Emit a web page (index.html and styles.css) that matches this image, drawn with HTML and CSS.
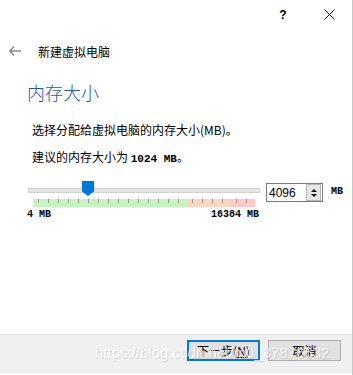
FILE: index.html
```html
<!DOCTYPE html>
<html lang="zh-CN">
<head>
  <meta charset="UTF-8" />
  <title>新建虚拟电脑</title>
  <link rel="stylesheet" href="styles.css">
</head>
<body>
  <div class="window">
    <div class="caption">
      <span class="cap-btn help">?</span>
      <span class="cap-btn close">
        <svg width="11" height="11" viewBox="0 0 11 11"><path d="M0.5 0.5 L10.5 10.5 M10.5 0.5 L0.5 10.5" stroke="#111" stroke-width="1" fill="none"/></svg>
      </span>
    </div>

    <div class="nav">
      <svg class="back" width="12" height="10" viewBox="0 0 12 10"><path d="M5 0.5 L0.8 5 L5 9.5 M0.8 5 H12" stroke="#8a8a8a" stroke-width="1.6" fill="none"/></svg>
      <span class="nav-title">新建虚拟电脑</span>
    </div>

    <div class="content">
      <h1 class="heading">内存大小</h1>
      <p class="line">选择分配给虚拟电脑的内存大小(MB)。</p>
      <p class="line">建议的内存大小为 <b class="mono">1024 MB</b>。</p>

      <div class="slider-row">
        <div class="slider">
          <div class="groove"></div>
          <div class="handle"></div>
          <div class="band">
            <div class="zone green"></div>
            <div class="zone orange"></div>
            <div class="zone red"></div>
          </div>
        </div>
        <div class="spin">
          <span class="spin-val">4096</span>
          <span class="spin-btns">
            <span class="arr up"></span>
            <span class="arr down"></span>
          </span>
        </div>
        <span class="unit mono small">MB</span>
      </div>
      <div class="range-labels mono small">
        <span>4 MB</span>
        <span>16384 MB</span>
      </div>
    </div>

    <div class="footer">
      <button class="btn primary">下一步(<u>N</u>)</button>
      <button class="btn">取消</button>
    </div>

    <div class="watermark">https://blog.csdn.net/m0_37876632</div>
  </div>
</body>
</html>
```

FILE: styles.css
```css
body {
  margin: 0;
  background: #fff;
  font-family: "Noto Sans CJK SC", "DejaVu Sans", sans-serif;
  color: #000;
}
.window {
  position: relative;
  width: 352px;
  height: 375px;
  border-right: 1px solid #c8c8c8;
  display: flex;
  flex-direction: column;
  overflow: hidden;
}
.caption {
  height: 29px;
  display: flex;
  justify-content: flex-end;
}
.cap-btn {
  width: 46px;
  display: flex;
  align-items: center;
  justify-content: center;
  font-family: "Liberation Sans", sans-serif;
  font-size: 12px;
  font-weight: bold;
}
.nav {
  height: 44px;
  display: flex;
  align-items: center;
  padding-left: 9px;
}
.back {
  margin-right: 17px;
}
.nav-title {
  font-size: 12px;
}
.content {
  padding-left: 27px;
  flex: 1;
}
.heading {
  margin: 7px 0 0;
  font-size: 18px;
  font-weight: 300;
  color: #2458ad;
  line-height: 24px;
}
.line {
  margin: 0;
  padding-left: 5px;
  font-size: 12px;
  line-height: 27px;
}
.line:first-of-type {
  margin-top: 12px;
}
.mono {
  font-family: "Liberation Mono", monospace;
  font-size: 11px;
}
.mono.small {
  font-size: 10px;
  font-weight: bold;
}
.slider-row {
  display: flex;
  align-items: flex-start;
  margin-top: 7px;
}
.slider {
  position: relative;
  width: 232px;
  height: 28px;
  margin-left: 1px;
}
.groove {
  margin-top: 8px;
  height: 3px;
  background: #e3e3e3;
  border: 1px solid #d2d2d2;
}
.handle {
  position: absolute;
  left: 54px;
  top: 1px;
  width: 12px;
  height: 15px;
  background: #0078d7;
  clip-path: polygon(0 0, 100% 0, 100% 70%, 50% 100%, 0 70%);
}
.band {
  display: flex;
  margin: 6px 4px 0 5px;
  height: 8px;
}
.zone {
  height: 8px;
  background-image: repeating-linear-gradient(to right, transparent 0, transparent 5px, #a89090 5px, #a89090 6px, transparent 6px, transparent 10px);
  background-size: 100% 4px;
  background-repeat: no-repeat;
}
.green { width: 154px; background-color: #c4f5c0; }
.orange { width: 44px; background-color: #fcd6c0; }
.red { width: 24px; background-color: #ffc8c8; }
.spin {
  margin-left: 6px;
  margin-top: 3px;
  width: 55px;
  height: 17px;
  border: 1px solid #7a7a7a;
  display: flex;
  align-items: center;
  justify-content: space-between;
  font-family: "Liberation Sans", sans-serif;
  font-size: 12px;
}
.spin-val {
  padding-left: 2px;
}
.spin-btns {
  width: 13px;
  height: 15px;
  margin-right: 1px;
  border: 1px solid #b4b4b4;
  background: #e6e6e6;
  display: flex;
  flex-direction: column;
  align-items: center;
  justify-content: center;
  gap: 2px;
}
.arr {
  width: 0;
  height: 0;
  border-left: 3px solid transparent;
  border-right: 3px solid transparent;
}
.up { border-bottom: 3px solid #111; }
.down { border-top: 3px solid #111; }
.unit {
  margin-left: 8px;
  margin-top: 6px;
}
.range-labels {
  width: 232px;
  display: flex;
  justify-content: space-between;
  margin-top: 1px;
}
.footer {
  height: 40px;
  background: #f0f0f0;
  border-top: 1px solid #dcdcdc;
  border-bottom: 1px solid #fff;
  display: flex;
  justify-content: flex-end;
  align-items: flex-start;
  padding-top: 5px;
  padding-right: 11px;
  box-sizing: border-box;
  gap: 8px;
  margin-bottom: 1px;
}
.btn {
  width: 73px;
  height: 21px;
  background: #e1e1e1;
  border: 1px solid #adadad;
  font-family: "Noto Sans CJK SC", sans-serif;
  font-size: 12px;
  padding: 0;
  color: #000;
}
.btn.primary {
  border: 2px solid #0078d7;
}
.watermark {
  position: absolute;
  left: 95px;
  top: 344px;
  font-family: "Liberation Sans", sans-serif;
  font-size: 15px;
  color: rgba(255, 255, 255, 0.75);
  text-shadow: 1px 1px 1px rgba(0, 0, 0, 0.12);
  white-space: nowrap;
  pointer-events: none;
}
```
